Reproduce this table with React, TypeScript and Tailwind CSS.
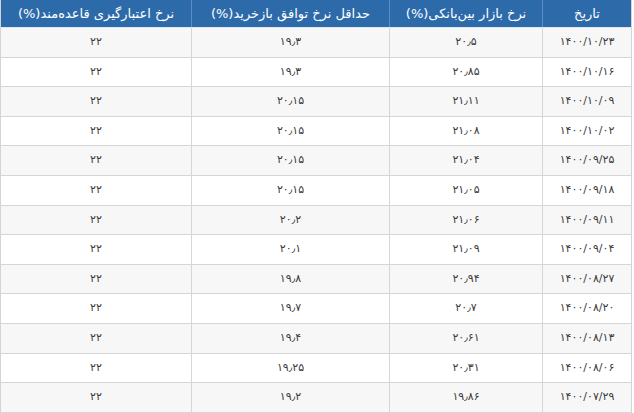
const headers = [
  'تاریخ',
  'نرخ بازار بین‌بانکی(%)',
  'حداقل نرخ توافق بازخرید(%)',
  'نرخ اعتبارگیری قاعده‌مند(%)',
]

const rows: [string, string, string, string][] = [
  ['۱۴۰۰/۱۰/۲۳', '۲۰٫۵', '۱۹٫۳', '۲۲'],
  ['۱۴۰۰/۱۰/۱۶', '۲۰٫۸۵', '۱۹٫۳', '۲۲'],
  ['۱۴۰۰/۱۰/۰۹', '۲۱٫۱۱', '۲۰٫۱۵', '۲۲'],
  ['۱۴۰۰/۱۰/۰۲', '۲۱٫۰۸', '۲۰٫۱۵', '۲۲'],
  ['۱۴۰۰/۰۹/۲۵', '۲۱٫۰۴', '۲۰٫۱۵', '۲۲'],
  ['۱۴۰۰/۰۹/۱۸', '۲۱٫۰۵', '۲۰٫۱۵', '۲۲'],
  ['۱۴۰۰/۰۹/۱۱', '۲۱٫۰۶', '۲۰٫۲', '۲۲'],
  ['۱۴۰۰/۰۹/۰۴', '۲۱٫۰۹', '۲۰٫۱', '۲۲'],
  ['۱۴۰۰/۰۸/۲۷', '۲۰٫۹۴', '۱۹٫۸', '۲۲'],
  ['۱۴۰۰/۰۸/۲۰', '۲۰٫۷', '۱۹٫۷', '۲۲'],
  ['۱۴۰۰/۰۸/۱۳', '۲۰٫۶۱', '۱۹٫۴', '۲۲'],
  ['۱۴۰۰/۰۸/۰۶', '۲۰٫۳۱', '۱۹٫۲۵', '۲۲'],
  ['۱۴۰۰/۰۷/۲۹', '۱۹٫۸۶', '۱۹٫۲', '۲۲'],
]

const cols = 'grid grid-cols-[89px_153px_198px_190px]'

export default function App() {
  return (
    <div className="w-[634px] h-[413px] overflow-hidden bg-white font-['DejaVu_Sans',sans-serif]">
      <div dir="rtl" className="w-[632px] border-l border-r border-[#d4d4d4]">
        {/* Header */}
        <div className={`${cols} h-[28px] bg-[#2c6aaa] border-b border-[#dce8f4]`}>
          {headers.map((h, i) => (
            <div
              key={i}
              className={`flex items-center justify-center text-[13px] text-white ${i < 3 ? 'border-l border-[#5b8cc2]' : ''}`}
            >
              {h}
            </div>
          ))}
        </div>

        {/* Rows */}
        {rows.map((r, ri) => (
          <div
            key={ri}
            className={`${cols} h-[29.6px] border-b border-[#d6d6d6] ${ri % 2 === 0 ? 'bg-[#f7f7f7]' : 'bg-white'}`}
          >
            {r.map((c, ci) => (
              <div
                key={ci}
                className={`flex items-center justify-center text-[11px] text-[#3a3a3a] ${ci < 3 ? 'border-l border-[#d6d6d6]' : ''}`}
              >
                <span dir="ltr">{c}</span>
              </div>
            ))}
          </div>
        ))}
      </div>
    </div>
  )
}
